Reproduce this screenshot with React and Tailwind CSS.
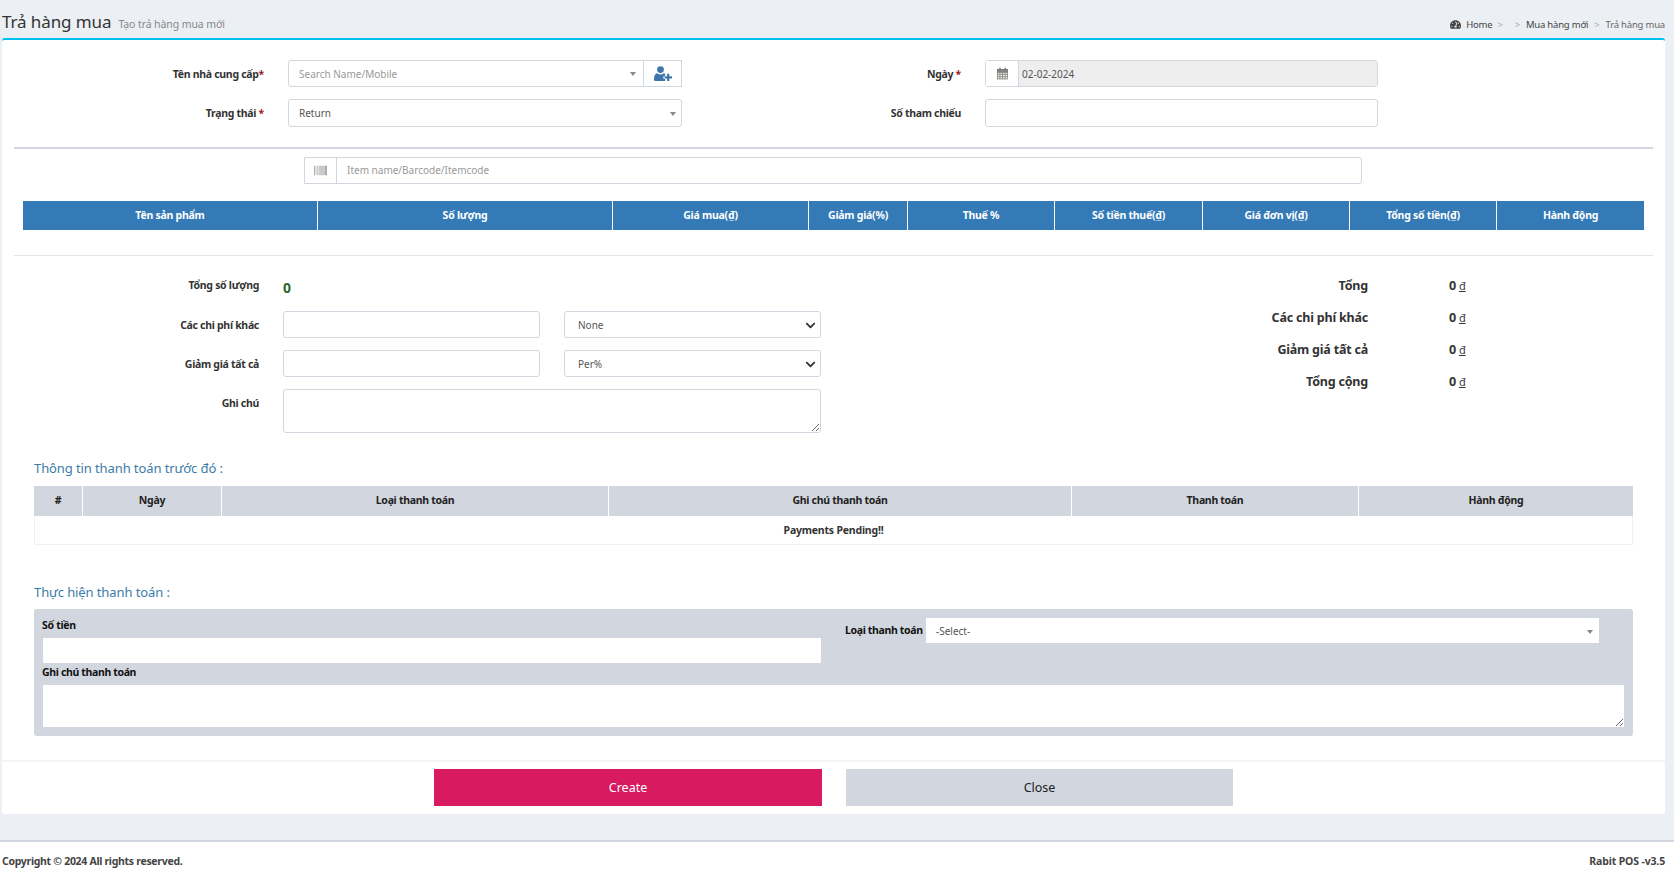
import React from "react";
import { FaBarcode, FaTachometerAlt, FaChevronDown } from "react-icons/fa";

const font = { fontFamily: '"Noto Sans", sans-serif' };

function Caret() {
  return <span className="w-0 h-0 border-x-[3px] border-x-transparent border-t-[4px] border-t-[#888]" />;
}

function UserPlusIcon() {
  return (
    <svg width="18" height="15" viewBox="0 0 18 15" fill="#3c76ad">
      <circle cx="6.5" cy="3.6" r="3.4" />
      <path d="M1 15c-.7 0-1-.5-1-1.2C0 10.600.6 7.700 3.300 7.300c.9.8 2 1.200 3.200 1.200s2.300-.4 3.200-1.200c.6.1 1.100.3 1.500.6v2.100H9.500v3h1.700v2H1z" />
      <rect x="10.500" y="10.300" width="7.500" height="2.200" />
      <rect x="13.100" y="7.700" width="2.200" height="7.300" />
    </svg>
  );
}

function CalendarIcon() {
  return (
    <svg width="11" height="13" viewBox="0 0 12 13" fill="none" stroke="#777" strokeWidth="0.8">
      <rect x="0.500" y="2" width="11" height="10.500" fill="#f4f1ea" />
      <path d="M0.500 5h11M0.500 7.500h11M0.500 10h11M3.200 5v7.500M6 5v7.500M8.800 5v7.500" />
      <rect x="0.500" y="2" width="11" height="3" fill="#888" />
      <path d="M3.200 0.300v3M8.800 0.300v3" strokeWidth="1.600" />
    </svg>
  );
}

function FieldLabel({ children, className = "" }) {
  return <label className={`font-bold text-[10.5px] tracking-[-0.3px] text-[#333] text-right ${className}`}>{children}</label>;
}

function Req() {
  return <span className="text-[#a02020]">*</span>;
}

function NativeLike({ text, className = "" }) {
  return (
    <div className={`h-[27px] border border-[#d2d6de] rounded-[3px] bg-white flex items-center pl-[13px] pr-[4px] pt-[1px] text-[10px] text-[#555] ${className}`}>
      <span className="flex-1">{text}</span>
      <FaChevronDown className="text-[#333] text-[11px]" />
    </div>
  );
}

const head1 = [
  ["Tên sản phẩm", 294],
  ["Số lượng", 295],
  ["Giá mua(₫)", 196],
  ["Giảm giá(%)", 99],
  ["Thuế %", 147],
  ["Số tiền thuế(₫)", 148],
  ["Giá đơn vị(₫)", 147],
  ["Tổng số tiền(₫)", 147],
  ["Hành động", 148],
];

const head2 = [
  ["#", 48],
  ["Ngày", 139],
  ["Loại thanh toán", 387],
  ["Ghi chú thanh toán", 463],
  ["Thanh toán", 287],
  ["Hành động", 275],
];

const totals = ["Tổng", "Các chi phí khác", "Giảm giá tất cả", "Tổng cộng"];

export default function App() {
  return (
    <div style={font} className="w-[1674px] h-[880px] overflow-hidden bg-[#ecf0f5] flex flex-col text-[#333]">
      <header className="h-[38px] pl-[2px] pr-[9px] flex items-end justify-between">
        <div className="flex items-baseline gap-[7px] pb-[4px]">
          <h1 className="text-[17px] leading-[24px] text-[#333] tracking-[-0.1px]">Trả hàng mua</h1>
          <span className="text-[10.5px] text-[#888] tracking-[-0.1px]">Tạo trả hàng mua mới</span>
        </div>
        <nav className="flex items-center text-[9.5px] text-[#444] tracking-[-0.2px] pb-[6px]">
          <FaTachometerAlt className="text-[11px] mr-[5px]" />
          <span>Home</span>
          <span className="text-[#aaa] ml-[5px] mr-[12px]">&gt;</span>
          <span className="text-[#aaa] mr-[6px]">&gt;</span>
          <span>Mua hàng mới</span>
          <span className="text-[#aaa] mx-[6px]">&gt;</span>
          <span className="text-[#666]">Trả hàng mua</span>
        </nav>
      </header>

      <main className="ml-[2px] mr-[9px] bg-white border-t-2 border-[#00c0ef] rounded-[3px] h-[776px] flex flex-col">
        <div className="px-[12px] pt-[20px]">
          <div className="grid grid-cols-[252px_394px_259px_393px] gap-x-[22px] gap-y-[12px] items-center">
            <FieldLabel className="pt-[2px] pr-[2px]">Tên nhà cung cấp<Req /></FieldLabel>
            <div className="flex h-[27px]">
              <div className="w-[356px] border border-[#d2d6de] rounded-l-[3px] flex items-center pl-[10px] pr-[7px] pt-[1px] text-[10px] text-[#999]">
                <span className="flex-1">Search Name/Mobile</span>
                <Caret />
              </div>
              <div className="w-[38px] border border-l-0 border-[#d2d6de] flex items-center justify-center">
                <UserPlusIcon />
              </div>
            </div>
            <FieldLabel className="pr-[2px] pt-[2px]">Ngày <Req /></FieldLabel>
            <div className="flex h-[27px] border border-[#d2d6de] rounded-[3px]">
              <div className="w-[33px] bg-white border-r border-[#d2d6de] flex items-center justify-center">
                <CalendarIcon />
              </div>
              <div className="flex-1 bg-[#eeeeee] flex items-center pl-[3px] pt-[1px] text-[10px] text-[#555]">02-02-2024</div>
            </div>

            <FieldLabel className="pt-[1px] pr-[2px]">Trạng thái <Req /></FieldLabel>
            <div className="h-[28px] border border-[#d2d6de] rounded-[3px] flex items-center pl-[10px] pr-[5px] pt-[1px] text-[10px] text-[#555]">
              <span className="flex-1">Return</span>
              <Caret />
            </div>
            <FieldLabel className="pr-[2px] pt-[1px]">Số tham chiếu</FieldLabel>
            <div className="h-[28px] border border-[#d2d6de] rounded-[3px] bg-white" />
          </div>

          <div className="h-[2px] bg-[#d2d6de] mt-[20px]" />

          <div className="mt-[8px] ml-[290px] w-[1058px] h-[27px] border border-[#d2d6de] rounded-r-[3px] flex items-center">
            <div className="w-[32px] h-full border-r border-[#d2d6de] flex items-center justify-center text-[#888] text-[13px]">
              <FaBarcode />
            </div>
            <span className="pl-[10px] text-[10px] text-[#999]">Item name/Barcode/Itemcode</span>
          </div>

          <div className="mt-[17px] ml-[9px] w-[1621px] flex h-[29px] bg-[#337ab7] text-white text-[10.5px] font-bold tracking-[-0.25px]">
            {head1.map(([t, w], i) => (
              <div key={t} style={{ width: w }} className={`flex items-center justify-center ${i ? "border-l border-white" : ""}`}>{t}</div>
            ))}
          </div>

          <div className="h-[1px] bg-[#e5e5e5] mt-[25px]" />

          <div className="flex mt-[19px]">
            <div className="w-[807px] grid grid-cols-[245px_256px_25px_257px]">
              <FieldLabel className="leading-[20px]">Tổng số lượng</FieldLabel>
              <div className="col-span-3 pl-[24px] text-[14px] leading-[20px] font-bold text-[#2d6a2d] pt-[3px] h-[26px]">0</div>

              <div className="col-span-4 h-[10px]" />

              <FieldLabel className="leading-[26px] pt-[1px]">Các chi phí khác</FieldLabel>
              <div className="ml-[24px] w-[257px] h-[27px] border border-[#d2d6de] rounded-[3px]" />
              <div className="ml-[24px]" />
              <NativeLike text="None" className="ml-[24px] w-[257px]" />

              <div className="col-span-4 h-[12px]" />

              <FieldLabel className="leading-[26px] pt-[1px]">Giảm giá tất cả</FieldLabel>
              <div className="ml-[24px] w-[257px] h-[27px] border border-[#d2d6de] rounded-[3px]" />
              <div className="ml-[24px]" />
              <NativeLike text="Per%" className="ml-[24px] w-[257px]" />

              <div className="col-span-4 h-[12px]" />

              <FieldLabel className="leading-[20px] pt-[4px]">Ghi chú</FieldLabel>
              <textarea className="col-span-3 ml-[24px] w-[538px] h-[44px] border border-[#d2d6de] rounded-[3px] outline-none" />
            </div>

            <div className="ml-[451px] w-[427px] -mt-[5px]">
              {totals.map((t) => (
                <div key={t} className="flex items-center h-[32px] text-[12.5px] font-bold text-[#333] tracking-[-0.2px]">
                  <div className="w-[120px] text-right whitespace-nowrap">{t}</div>
                  <div className="ml-[81px]">0 <span className="font-normal underline text-[11px]">đ</span></div>
                </div>
              ))}
            </div>
          </div>

          <div className="mx-[20px]">
            <h3 className="mt-[24px] text-[13px] leading-[22px] text-[#3c7ca8] tracking-[-0.1px]">Thông tin thanh toán trước đó :</h3>
            <div className="mt-[7px] w-[1599px]">
              <div className="flex h-[30px] bg-[#d2d6de] text-[10.5px] font-bold tracking-[-0.3px] text-[#222]">
                {head2.map(([t, w], i) => (
                  <div key={t} style={{ width: w }} className={`flex items-center justify-center ${i ? "border-l border-white" : ""}`}>{t}</div>
                ))}
              </div>
              <div className="h-[29px] border border-t-0 border-[#f0f0f0] flex items-center justify-center pt-[2px] text-[10.5px] font-bold tracking-[-0.2px] text-[#333]">Payments Pending!!</div>
            </div>

            <h3 className="mt-[36px] text-[13px] leading-[22px] text-[#3c7ca8] tracking-[-0.1px]">Thực hiện thanh toán :</h3>
            <div className="mt-[6px] w-[1599px] h-[127px] bg-[#d2d6de] rounded-[3px] px-[9px] flex flex-col">
              <div className="flex">
                <div className="w-[778px]">
                  <div className="h-[29px] flex items-end pb-[1px] -ml-[1px] text-[10.5px] font-bold text-[#111] tracking-[-0.3px] leading-[24px]">Số tiền</div>
                  <div className="h-[25px] bg-white rounded-[1px]" />
                </div>
                <div className="ml-[24px] mt-[9px] flex items-center h-[25px]">
                  <span className="w-[81px] text-[10.5px] font-bold text-[#111] tracking-[-0.35px] whitespace-nowrap">Loại thanh toán</span>
                  <div className="w-[673px] h-[25px] bg-white flex items-center pl-[10px] pr-[6px] pt-[2px] text-[10px] text-[#555]">
                    <span className="flex-1">-Select-</span>
                    <Caret />
                  </div>
                </div>
              </div>
              <div className="h-[22px] flex items-center pb-[2px] -ml-[1px] text-[10.5px] font-bold text-[#111] tracking-[-0.35px]">Ghi chú thanh toán</div>
              <textarea className="h-[42px] w-full bg-white outline-none block" />
            </div>
          </div>

          <div className="h-[24px]" />
        </div>

        <div className="border-t-2 border-[#f4f4f4] flex-1 flex pt-[7px] pl-[432px] gap-[24px]">
          <button className="w-[388px] h-[37px] pt-[1px] bg-[#d81b60] text-white text-[12.5px]">Create</button>
          <button className="w-[387px] h-[37px] pt-[1px] bg-[#d2d6de] text-[#222] text-[12.5px]">Close</button>
        </div>
      </main>

      <div className="h-[26px]" />

      <footer className="h-[40px] bg-white border-t-2 border-[#d2d6de] pl-[2px] pr-[9px] pt-[2px] flex items-center justify-between text-[10.5px] font-bold text-[#444] tracking-[-0.15px]">
        <span className="tracking-[-0.3px]">Copyright © 2024 All rights reserved.</span>
        <span>Rabit POS -v3.5</span>
      </footer>
    </div>
  );
}
